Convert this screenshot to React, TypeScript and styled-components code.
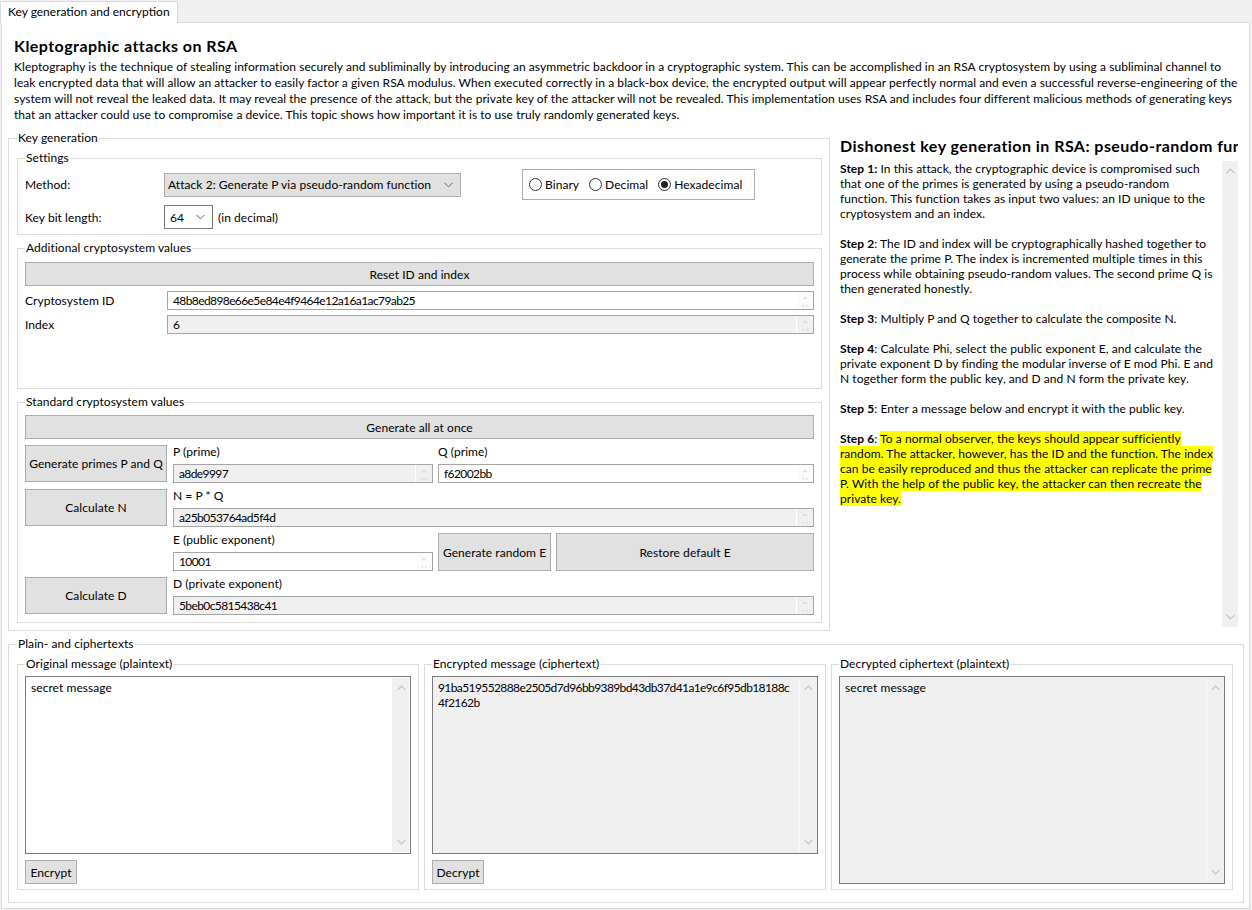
import React from 'react';
import styled, { createGlobalStyle } from 'styled-components';

const FONT = `"Lato", "Liberation Sans", sans-serif`;

const GlobalStyle = createGlobalStyle`
  html, body { margin: 0; padding: 0; background: #f0f0f0; }
  body {
    font-family: ${FONT};
    font-size: 12px;
    color: #000;
    letter-spacing: 0.06px;
  }
  * { box-sizing: border-box; }
`;

const Window = styled.div`
  width: 1252px;
  height: 910px;
  display: flex;
  flex-direction: column;
  background: #f0f0f0;
`;

const TabStrip = styled.div`
  height: 22px;
  padding-top: 1px;
  display: flex;
`;

const Tab = styled.div`
  position: relative;
  z-index: 1;
  width: 178px;
  height: 22px;
  background: #fff;
  border: 1px solid #d9d9d9;
  border-bottom: none;
  padding-left: 7px;
  line-height: 20px;
  white-space: nowrap;
  letter-spacing: 0;
`;

const Page = styled.div`
  margin-left: 1px;
  width: 1249px;
  height: 887px;
  background: #fff;
  border: 1px solid #d9d9d9;
  padding: 13px 5px 0 6px;
  display: flex;
  flex-direction: column;
`;

const Title = styled.h1`
  margin: 0 0 0 6px;
  font-size: 16px;
  font-weight: 700;
  line-height: 20px;
  letter-spacing: 0.45px;
`;

const Description = styled.p`
  margin: 3px 0 0 6px;
  line-height: 16px;
  white-space: nowrap;
`;

const MainRow = styled.div`
  margin-top: 8px;
  display: flex;
  gap: 10px;
  align-items: flex-start;
`;

const Group = styled.fieldset<{ $w?: number; $h?: number; $pad?: string }>`
  margin: 0;
  min-width: 0;
  border: 1px solid #dcdcdc;
  padding: ${(p) => p.$pad ?? '6px 7px 7px 7px'};
  ${(p) => (p.$w ? `width: ${p.$w}px;` : '')}
  ${(p) => (p.$h ? `height: ${p.$h}px;` : '')}
`;

const Legend = styled.legend`
  padding: 0 1px;
  margin: 0;
  line-height: 14px;
  font-size: 12px;
`;

const Stack = styled.div<{ $gap: number }>`
  display: flex;
  flex-direction: column;
  gap: ${(p) => p.$gap}px;
`;

const SettingsRow = styled.div<{ $h: number }>`
  display: flex;
  align-items: center;
  height: ${(p) => p.$h}px;
`;

const RowLabel = styled.span<{ $w: number }>`
  width: ${(p) => p.$w}px;
  flex: none;
  white-space: nowrap;
`;

const Combo = styled.div<{ $w: number; $light?: boolean }>`
  width: ${(p) => p.$w}px;
  height: 24px;
  flex: none;
  display: flex;
  align-items: center;
  justify-content: space-between;
  padding: 0 7px 0 ${(p) => (p.$light ? 5 : 3)}px;
  background: ${(p) => (p.$light ? '#fff' : '#e1e1e1')};
  border: 1px solid ${(p) => (p.$light ? '#7a7a7a' : '#adadad')};
  white-space: nowrap;
`;

const AfterText = styled.span`
  margin-left: 5px;
`;

const RadioBox = styled.div`
  margin-left: 61px;
  width: 233px;
  height: 31px;
  border: 1px solid #adadad;
  display: flex;
  align-items: center;
  gap: 10px;
  padding-left: 6px;
`;

const RadioItem = styled.label`
  display: flex;
  align-items: center;
  gap: 3px;
  white-space: nowrap;
`;

const RadioCircle = styled.span<{ $on?: boolean }>`
  width: 13px;
  height: 13px;
  border-radius: 50%;
  border: 1px solid #333;
  background: #fff;
  display: flex;
  align-items: center;
  justify-content: center;
  &::after {
    content: '';
    width: 7px;
    height: 7px;
    border-radius: 50%;
    background: ${(p) => (p.$on ? '#222' : 'transparent')};
  }
`;

const Button = styled.button<{ $h: number; $w?: number }>`
  font-family: ${FONT};
  font-size: 12px;
  letter-spacing: 0.06px;
  color: #000;
  background: #e1e1e1;
  border: 1px solid #adadad;
  border-radius: 0;
  padding: 0;
  height: ${(p) => p.$h}px;
  width: ${(p) => (p.$w ? `${p.$w}px` : '100%')};
  white-space: nowrap;
  flex: none;
`;

const FieldRow = styled.div`
  display: flex;
  align-items: center;
  height: 19px;
`;

const Field = styled.div<{ $ro?: boolean }>`
  flex: 1;
  min-width: 0;
  height: 19px;
  display: flex;
  border: 1px solid #a5a5a5;
  background: ${(p) => (p.$ro ? '#f0f0f0' : '#fff')};
`;

const FieldText = styled.span`
  flex: 1;
  padding-left: 5px;
  line-height: 17px;
  letter-spacing: -0.6px;
  white-space: nowrap;
  overflow: hidden;
`;

const MiniScroll = styled.span<{ $ro?: boolean }>`
  width: 17px;
  flex: none;
  display: flex;
  background: ${(p) => (p.$ro ? '#f0f0f0' : '#fbfbfb')};
  border-left: 1px solid #fff;
`;

const StdGrid = styled.div`
  display: grid;
  grid-template-columns: 142px 1fr;
  grid-auto-rows: 38px;
  column-gap: 6px;
  row-gap: 6px;
`;

const SubGrid = styled.div<{ $cols: string }>`
  display: grid;
  grid-template-columns: ${(p) => p.$cols};
  column-gap: 5px;
`;

const Labeled = styled.div`
  display: flex;
  flex-direction: column;
  min-width: 0;
`;

const SmallLabel = styled.span`
  height: 19px;
  line-height: 14px;
  white-space: nowrap;
`;

const RightPanel = styled.div`
  width: 398px;
  padding-top: 5px;
  display: flex;
  flex-direction: column;
`;

const Heading = styled.h2`
  margin: 0;
  font-size: 16px;
  font-weight: 700;
  line-height: 20px;
  letter-spacing: 0.45px;
  white-space: nowrap;
  overflow: hidden;
`;

const InfoBox = styled.div`
  margin-top: 5px;
  height: 466px;
  display: flex;
`;

const InfoText = styled.div`
  flex: 1;
  overflow: hidden;
  white-space: nowrap;
`;

const Para = styled.p`
  margin: 0 0 15px 0;
  line-height: 15px;
`;

const Mark = styled.span`
  background: #ffff00;
`;

const ScrollCol = styled.div<{ $w: number; $ro?: boolean }>`
  width: ${(p) => p.$w}px;
  flex: none;
  background: #f0f0f0;
  border-left: 1px solid ${(p) => (p.$ro ? '#fafafa' : '#f0f0f0')};
  display: flex;
  flex-direction: column;
  align-items: center;
  justify-content: space-between;
  padding: 7px 0 7px;
`;

const BottomGroup = styled(Group)`
  margin-top: 6px;
`;

const MsgRow = styled.div`
  display: flex;
  gap: 5px;
`;

const TextArea = styled.div<{ $h: number; $ro?: boolean }>`
  height: ${(p) => p.$h}px;
  display: flex;
  border: 1px solid #7a7a7a;
  background: ${(p) => (p.$ro ? '#f0f0f0' : '#fff')};
  padding: 1px;
`;

const TextBody = styled.div<{ $hex?: boolean }>`
  flex: 1;
  padding: 2px 4px;
  line-height: 15px;
  letter-spacing: ${(p) => (p.$hex ? '-0.6px' : '0.06px')};
  white-space: nowrap;
  overflow: hidden;
`;

const Chevron = ({ dir }: { dir: 'up' | 'down' }) => (
  <svg width="9" height="6" viewBox="0 0 9 6">
    <path
      d={dir === 'up' ? 'M0.5 5.2 L4.5 1.2 L8.5 5.2' : 'M0.5 0.8 L4.5 4.8 L8.5 0.8'}
      fill="none"
      stroke="#c4c4c4"
      strokeWidth="1.2"
    />
  </svg>
);

const ComboArrow = () => (
  <svg width="9" height="6" viewBox="0 0 9 6">
    <path d="M0.5 0.8 L4.5 4.8 L8.5 0.8" fill="none" stroke="#606060" strokeWidth="1" />
  </svg>
);

const MiniArrows = () => (
  <svg width="17" height="17" viewBox="0 0 17 17">
    <path d="M6.5 7 L8.5 5 L10.5 7" fill="none" stroke="#c8c8c8" strokeWidth="1" />
    <path d="M6.5 13 L6.5 14.5 L7.5 14.5 M10.5 13 L10.5 14.5 L9.5 14.5" fill="none" stroke="#d0d0d0" strokeWidth="1" />
  </svg>
);

const TextField = ({ value, ro }: { value: string; ro?: boolean }) => (
  <Field $ro={ro}>
    <FieldText>{value}</FieldText>
    <MiniScroll $ro={ro}>
      <MiniArrows />
    </MiniScroll>
  </Field>
);

const LabeledField = ({ label, value, ro }: { label: string; value: string; ro?: boolean }) => (
  <Labeled>
    <SmallLabel>{label}</SmallLabel>
    <TextField value={value} ro={ro} />
  </Labeled>
);

const MessageBox = ({
  title,
  h,
  ro,
  hex,
  children,
  action,
}: {
  title: string;
  h: number;
  ro?: boolean;
  hex?: boolean;
  children: React.ReactNode;
  action?: string;
}) => (
  <Group $w={402} $pad="5px 7px 5px 7px">
    <Legend>{title}</Legend>
    <Stack $gap={6}>
      <TextArea $h={h} $ro={ro}>
        <TextBody $hex={hex}>{children}</TextBody>
        <ScrollCol $w={17} $ro={ro}>
          <Chevron dir="up" />
          <Chevron dir="down" />
        </ScrollCol>
      </TextArea>
      {action && (
        <Button $h={24} $w={52}>
          {action}
        </Button>
      )}
    </Stack>
  </Group>
);

export default function App() {
  return (
    <>
      <GlobalStyle />
      <Window>
        <TabStrip>
          <Tab>Key generation and encryption</Tab>
        </TabStrip>
        <Page>
          <Title>Kleptographic attacks on RSA</Title>
          <Description>
            Kleptography is the technique of stealing information securely and subliminally by introducing an asymmetric backdoor in a cryptographic system. This can be accomplished in an RSA cryptosystem by using a subliminal channel to
            <br />
            leak encrypted data that will allow an attacker to easily factor a given RSA modulus. When executed correctly in a black-box device, the encrypted output will appear perfectly normal and even a successful reverse-engineering of the
            <br />
            system will not reveal the leaked data. It may reveal the presence of the attack, but the private key of the attacker will not be revealed. This implementation uses RSA and includes four different malicious methods of generating keys
            <br />
            that an attacker could use to compromise a device. This topic shows how important it is to use truly randomly generated keys.
          </Description>

          <MainRow>
            <Group $w={822} $pad="6px 7px 7px 8px">
              <Legend>Key generation</Legend>
              <Stack $gap={6}>
                <Group $pad="4px 7px 5px 7px">
                  <Legend>Settings</Legend>
                  <Stack $gap={5}>
                    <SettingsRow $h={31}>
                      <RowLabel $w={139}>Method:</RowLabel>
                      <Combo $w={297}>
                        <span>Attack 2: Generate P via pseudo-random function</span>
                        <ComboArrow />
                      </Combo>
                      <RadioBox>
                        <RadioItem>
                          <RadioCircle />
                          Binary
                        </RadioItem>
                        <RadioItem>
                          <RadioCircle />
                          Decimal
                        </RadioItem>
                        <RadioItem>
                          <RadioCircle $on />
                          Hexadecimal
                        </RadioItem>
                      </RadioBox>
                    </SettingsRow>
                    <SettingsRow $h={24}>
                      <RowLabel $w={139}>Key bit length:</RowLabel>
                      <Combo $w={49} $light>
                        <span>64</span>
                        <ComboArrow />
                      </Combo>
                      <AfterText>(in decimal)</AfterText>
                    </SettingsRow>
                  </Stack>
                </Group>

                <Group $h={148} $pad="7px 7px 5px 7px">
                  <Legend>Additional cryptosystem values</Legend>
                  <Stack $gap={5}>
                    <Button $h={24}>Reset ID and index</Button>
                    <FieldRow>
                      <RowLabel $w={142}>Cryptosystem ID</RowLabel>
                      <TextField value="48b8ed898e66e5e84e4f9464e12a16a1ac79ab25" />
                    </FieldRow>
                    <FieldRow>
                      <RowLabel $w={142}>Index</RowLabel>
                      <TextField value="6" ro />
                    </FieldRow>
                  </Stack>
                </Group>

                <Group $pad="6px 7px 7px 7px">
                  <Legend>Standard cryptosystem values</Legend>
                  <Stack $gap={6}>
                    <Button $h={24}>Generate all at once</Button>
                    <StdGrid>
                      <Button $h={37}>Generate primes P and Q</Button>
                      <SubGrid $cols="260px 1fr">
                        <LabeledField label="P (prime)" value="a8de9997" ro />
                        <LabeledField label="Q (prime)" value="f62002bb" />
                      </SubGrid>
                      <Button $h={37}>Calculate N</Button>
                      <LabeledField label="N = P * Q" value="a25b053764ad5f4d" ro />
                      <span />
                      <SubGrid $cols="260px 113px 1fr">
                        <LabeledField label="E (public exponent)" value="10001" />
                        <Button $h={38}>Generate random E</Button>
                        <Button $h={38}>Restore default E</Button>
                      </SubGrid>
                      <Button $h={37}>Calculate D</Button>
                      <LabeledField label="D (private exponent)" value="5beb0c5815438c41" ro />
                    </StdGrid>
                  </Stack>
                </Group>
              </Stack>
            </Group>

            <RightPanel>
              <Heading>Dishonest key generation in RSA: pseudo-random function</Heading>
              <InfoBox>
                <InfoText>
                  <Para>
                    <b>Step 1:</b> In this attack, the cryptographic device is compromised such
                    <br />
                    that one of the primes is generated by using a pseudo-random
                    <br />
                    function. This function takes as input two values: an ID unique to the
                    <br />
                    cryptosystem and an index.
                  </Para>
                  <Para>
                    <b>Step 2</b>: The ID and index will be cryptographically hashed together to
                    <br />
                    generate the prime P. The index is incremented multiple times in this
                    <br />
                    process while obtaining pseudo-random values. The second prime Q is
                    <br />
                    then generated honestly.
                  </Para>
                  <Para>
                    <b>Step 3</b>: Multiply P and Q together to calculate the composite N.
                  </Para>
                  <Para>
                    <b>Step 4</b>: Calculate Phi, select the public exponent E, and calculate the
                    <br />
                    private exponent D by finding the modular inverse of E mod Phi. E and
                    <br />
                    N together form the public key, and D and N form the private key.
                  </Para>
                  <Para>
                    <b>Step 5</b>: Enter a message below and encrypt it with the public key.
                  </Para>
                  <Para>
                    <b>Step 6</b>: <Mark>To a normal observer, the keys should appear sufficiently</Mark>
                    <br />
                    <Mark>random. The attacker, however, has the ID and the function. The index</Mark>
                    <br />
                    <Mark>can be easily reproduced and thus the attacker can replicate the prime</Mark>
                    <br />
                    <Mark>P. With the help of the public key, the attacker can then recreate the</Mark>
                    <br />
                    <Mark>private key.</Mark>
                  </Para>
                </InfoText>
                <ScrollCol $w={16}>
                  <Chevron dir="up" />
                  <Chevron dir="down" />
                </ScrollCol>
              </InfoBox>
            </RightPanel>
          </MainRow>

          <BottomGroup $w={1236} $pad="6px 10px 12px 8px">
            <Legend>Plain- and ciphertexts</Legend>
            <MsgRow>
              <MessageBox title="Original message (plaintext)" h={178} action="Encrypt">
                secret message
              </MessageBox>
              <MessageBox title="Encrypted message (ciphertext)" h={178} ro hex action="Decrypt">
                91ba519552888e2505d7d96bb9389bd43db37d41a1e9c6f95db18188c
                <br />
                4f2162b
              </MessageBox>
              <MessageBox title="Decrypted ciphertext (plaintext)" h={208} ro>
                secret message
              </MessageBox>
            </MsgRow>
          </BottomGroup>
        </Page>
      </Window>
    </>
  );
}
